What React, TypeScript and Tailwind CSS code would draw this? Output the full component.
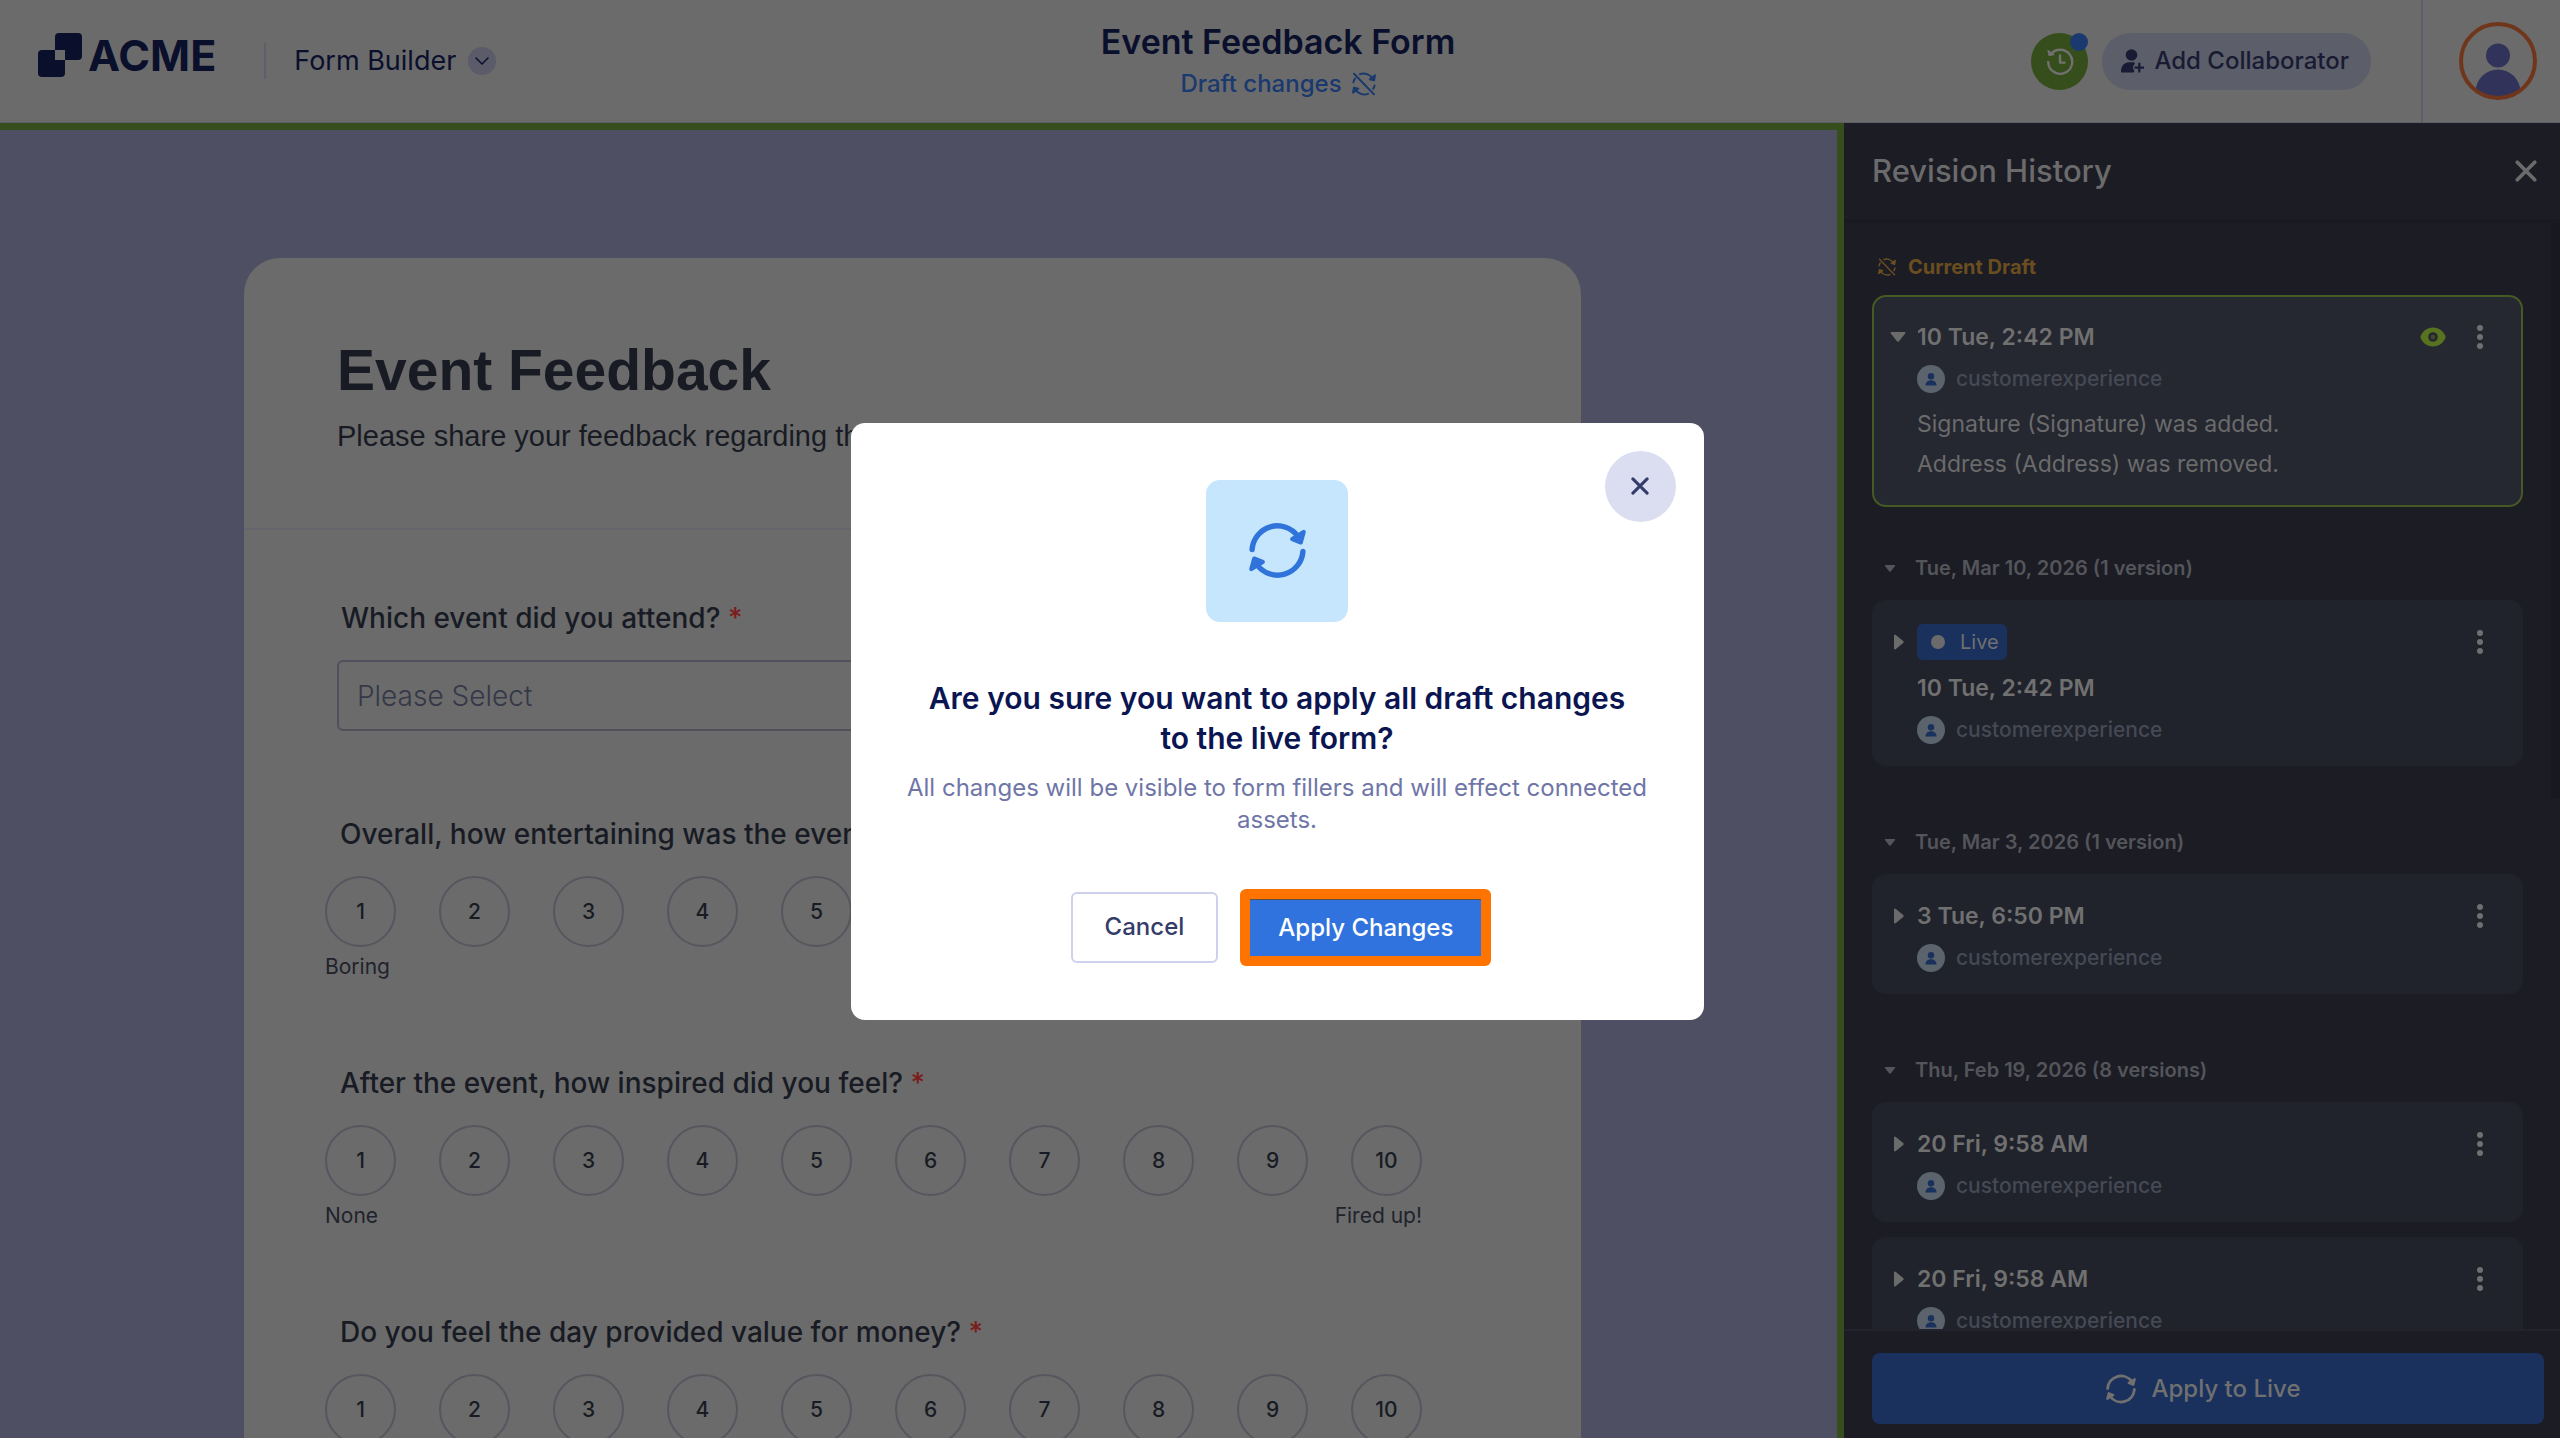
import { useState } from "react";
import type { ReactNode } from "react";

interface Version {
  id: number;
  date: string;
  live?: boolean;
  current?: boolean;
  changes?: string[];
}

interface VersionGroup {
  title: string;
  versions: Version[];
}

interface Rating {
  id: string;
  question: string;
  low?: string;
  high?: string;
}

const currentDraft: Version = {
  id: 1,
  date: "10 Tue, 2:42 PM",
  current: true,
  changes: ["Signature (Signature) was added.", "Address (Address) was removed."],
};

const groups: VersionGroup[] = [
  {
    title: "Tue, Mar 10, 2026 (1 version)",
    versions: [{ id: 2, date: "10 Tue, 2:42 PM", live: true }],
  },
  {
    title: "Tue, Mar 3, 2026 (1 version)",
    versions: [{ id: 3, date: "3 Tue, 6:50 PM" }],
  },
  {
    title: "Thu, Feb 19, 2026 (8 versions)",
    versions: [
      { id: 4, date: "20 Fri, 9:58 AM" },
      { id: 5, date: "20 Fri, 9:58 AM" },
    ],
  },
];

const ratings: Rating[] = [
  { id: "entertaining", question: "Overall, how entertaining was the event?", low: "Boring" },
  { id: "inspired", question: "After the event, how inspired did you feel?", low: "None", high: "Fired up!" },
  { id: "value", question: "Do you feel the day provided value for money?" },
];

const scale = [1, 2, 3, 4, 5, 6, 7, 8, 9, 10];

// Icons

const SyncIcon = ({ className }: { className: string }) => (
  <svg viewBox="0 0 24 24" className={className} fill="none" stroke="currentColor" strokeLinecap="round" strokeLinejoin="round" aria-hidden="true">
    <path d="M1.3 11.6A10.7 10.7 0 0 1 20.6 6" strokeWidth="2.3" />
    <path d="M23 4.2 21.8 8.6 18.2 7.2Z" fill="currentColor" strokeWidth="1.8" />
    <path d="M22.7 12.4A10.7 10.7 0 0 1 3.4 18" strokeWidth="2.3" />
    <path d="M1 19.8 2.2 15.4 5.8 16.8Z" fill="currentColor" strokeWidth="1.8" />
  </svg>
);

const SyncOffIcon = ({ className }: { className: string }) => (
  <svg viewBox="0 0 24 24" className={className} fill="none" stroke="currentColor" strokeWidth="2" strokeLinecap="round" strokeLinejoin="round" aria-hidden="true">
    <path d="M2 1.8 22 22.4" />
    <path d="M1.4 10.4A10.6 10.6 0 0 1 3 6.6" />
    <path d="M8 2.1A10.6 10.6 0 0 1 20.6 6.6" />
    <path d="M23 3.4 22 8.4 17.8 7.2Z" fill="currentColor" />
    <path d="M22.6 13.4A10.6 10.6 0 0 1 21.2 16.8" />
    <path d="M16 21.9A10.6 10.6 0 0 1 3.4 17.4" />
    <path d="M1 20.6 2 15.6 6.2 16.8Z" fill="currentColor" />
  </svg>
);

const CloseIcon = ({ className }: { className: string }) => (
  <svg viewBox="0 0 24 24" className={className} fill="none" stroke="currentColor" strokeWidth="4" strokeLinecap="round" aria-hidden="true">
    <path d="M2.5 2.5 21.5 21.5M21.5 2.5 2.5 21.5" />
  </svg>
);

const HistoryIcon = () => (
  <svg viewBox="0 0 28 28" className="size-7" fill="none" stroke="currentColor" strokeWidth="2.4" strokeLinecap="round" strokeLinejoin="round" aria-hidden="true">
    <path d="M2.2 15A12 12 0 1 0 4.6 7.6" />
    <path d="M2 3.6 3 8.4 7.8 7.6Z" fill="currentColor" strokeWidth="1.2" />
    <path d="M14 8.5V15.6H18.6" />
  </svg>
);

const AddPersonIcon = () => (
  <svg viewBox="0 0 24 24" className="size-6" fill="currentColor" aria-hidden="true">
    <circle cx="11.5" cy="6" r="5.8" />
    <path d="M1 22.5C1 17 4.5 13.3 9 13.3H13.6C14.8 13.3 15.3 14.6 14.4 15.4 12.6 16.8 12.6 19.4 14 21 14.7 21.8 14.3 23.6 13 23.6H2C1.4 23.6 1 23.2 1 22.5Z" />
    <path d="M19.3 14.6V22.6M15.3 18.6H23.3" stroke="currentColor" strokeWidth="2.2" strokeLinecap="round" />
  </svg>
);

const AvatarIcon = () => (
  <svg viewBox="0 0 78 78" className="size-[78px]" aria-hidden="true">
    <clipPath id="avatar-clip">
      <circle cx="39" cy="39" r="36" />
    </clipPath>
    <g clipPath="url(#avatar-clip)" fill="#32335a">
      <circle cx="39" cy="33.5" r="12" />
      <circle cx="39" cy="70" r="22.5" />
    </g>
    <circle cx="39" cy="39" r="37" fill="none" stroke="#70361c" strokeWidth="4" />
  </svg>
);

const EyeIcon = () => (
  <svg viewBox="0 0 26 20" className="h-5 w-[26px] text-[#587320]" aria-hidden="true">
    <path
      fill="currentColor"
      fillRule="evenodd"
      d="M13 .5C19 .5 23.6 4.6 25.3 8.8Q25.8 10 25.3 11.2C23.6 15.4 19 19.5 13 19.5S2.4 15.4 .7 11.2Q.2 10 .7 8.8C2.4 4.6 7 .5 13 .5ZM13 5.2A4.8 4.8 0 1 0 13 14.8A4.8 4.8 0 1 0 13 5.2Z"
    />
    <circle cx="13" cy="10" r="2.3" fill="currentColor" opacity="0.5" />
  </svg>
);

const UserBadge = () => (
  <svg viewBox="0 0 28 28" className="size-7" aria-hidden="true">
    <circle cx="14" cy="14" r="14" fill="#5b646c" />
    <circle cx="14" cy="11.2" r="3.2" fill="#1a315e" />
    <path d="M8.5 20.5C8.5 17.5 10.5 15.3 14 15.3S19.5 17.5 19.5 20.5Z" fill="#1a315e" />
  </svg>
);

const TriangleDown = ({ className }: { className: string }) => (
  <svg viewBox="0 0 16 10" className={className} fill="currentColor" aria-hidden="true">
    <path d="M1.5 0H14.5Q16 .3 15.2 1.6L9 9.2Q8 10.2 7 9.2L.8 1.6Q0 .3 1.5 0Z" />
  </svg>
);

const TriangleRight = () => (
  <svg viewBox="0 0 10 16" className="h-4 w-2.5" fill="currentColor" aria-hidden="true">
    <path d="M0 1.5Q.3 0 1.6 .8L9.2 7Q10.2 8 9.2 9L1.6 15.2Q.3 16 0 14.5Z" />
  </svg>
);

// Revision history

const VersionTitle = ({ children }: { children: ReactNode }) => (
  <span className="flex h-9 items-center text-[23px] font-semibold text-[#707070]">{children}</span>
);

const VersionCard = ({ version }: { version: Version }) => (
  <article
    className={`flex rounded-[14px] border-2 pt-[22px] pr-[31px] pb-5 pl-3 ${
      version.current ? "border-[#465b23] bg-[#252731]" : "border-[#20232c] bg-[#20232c]"
    }`}
  >
    <button aria-label="Toggle version details" className="flex h-9 w-[31px] items-center justify-start pl-1 text-[#6b6b6b]">
      {version.current ? <TriangleDown className="h-2.5 w-4" /> : <span className="pl-1"><TriangleRight /></span>}
    </button>
    <div className="flex flex-1 flex-col gap-2.5">
      {version.live && (
        <span className="flex h-9 items-center gap-[15px] self-start rounded-md bg-[#1a315e] pr-2 pl-3.5 text-xl text-[#707070]">
          <span className="size-3.5 rounded-full bg-[#6b6b6b]" />
          Live
        </span>
      )}
      <VersionTitle>{version.date}</VersionTitle>
      <div className="flex items-center gap-[11px] text-[21px]/7 font-medium text-[#454954]">
        <UserBadge />
        customerexperience
      </div>
      {version.changes && (
        <ul className="py-px text-[23px]/10 text-[#6b6b6b]">
          {version.changes.map((change) => (
            <li key={change}>{change}</li>
          ))}
        </ul>
      )}
    </div>
    {version.current && (
      <button aria-label="Viewing this version" className="mr-6 flex h-9 items-center">
        <EyeIcon />
      </button>
    )}
    <button aria-label="More options" className="flex h-9 w-5 flex-col items-center justify-center gap-[3px]">
      <span className="size-1.5 rounded-full bg-[#707070]" />
      <span className="size-1.5 rounded-full bg-[#707070]" />
      <span className="size-1.5 rounded-full bg-[#707070]" />
    </button>
  </article>
);

const RevisionHistory = ({ onApply }: { onApply: () => void }) => (
  <aside className="flex w-[716px] shrink-0 flex-col bg-[#1c1c25]">
    <div className="flex h-24 shrink-0 items-center justify-between pr-[23px] pl-7 text-[#6b6b6b]">
      <h2 className="text-[31px] font-medium">Revision History</h2>
      <button aria-label="Close revision history">
        <CloseIcon className="size-[22px]" />
      </button>
    </div>
    <div className="flex min-h-0 flex-1 border-t-4 border-[#191922]">
      <div className="min-w-0 flex-1 overflow-hidden pt-8 pr-7 pl-7">
        <div className="mb-4 flex items-center gap-3 pl-1.5 text-xl/6 font-bold text-[#6a4e20]">
          <SyncOffIcon className="size-[18px]" />
          Current Draft
        </div>
        <VersionCard version={currentDraft} />
        {groups.map((group) => (
          <section key={group.title}>
            <h3 className="flex items-center gap-[19px] pt-[49px] pb-5 pl-3 text-xl/6 font-semibold text-[#54555a]">
              <TriangleDown className="h-[7px] w-3" />
              {group.title}
            </h3>
            {group.versions.map((version) => (
              <div key={version.id} className="pb-[15px]">
                <VersionCard version={version} />
              </div>
            ))}
          </section>
        ))}
      </div>
      {/* Scrollbar */}
      <div className="w-[9px]">
        <div className="h-[52%] bg-[#181821]" />
      </div>
    </div>
    <div className="border-t-2 border-[#23232d] pt-[22px] pr-4 pb-3.5 pl-7">
      <button
        onClick={onApply}
        className="flex h-[71px] w-full items-center justify-center gap-4 rounded-lg bg-[#1a315e] pr-2.5 text-2xl font-medium text-[#707070]"
      >
        <SyncIcon className="size-[30px]" />
        Apply to Live
      </button>
    </div>
  </aside>
);

// Form

const Required = () => <span className="text-[#7c1c1c]">*</span>;

const RatingQuestion = ({ rating }: { rating: Rating }) => (
  <div role="radiogroup" aria-labelledby={rating.id} className="self-start pl-[81px]">
    <p id={rating.id} className="mb-6 pl-[15px] text-[28px]/9 font-medium">
      {rating.question} <Required />
    </p>
    <div className="flex gap-[43px]">
      {scale.map((value) => (
        <label
          key={value}
          className="flex size-[71px] items-center justify-center rounded-full border-2 border-[#56565f] text-[21px] font-medium"
        >
          <input type="radio" name={rating.id} value={value} className="sr-only" />
          {value}
        </label>
      ))}
    </div>
    <div className="mt-1.5 flex justify-between text-[21px]/7 text-[#20232c]">
      <span>{rating.low}</span>
      <span>{rating.high}</span>
    </div>
  </div>
);

const FeedbackForm = () => (
  <main className="min-w-0 flex-1 overflow-hidden border-t-[7px] border-r-[7px] border-[#364e1b] bg-[#4f4f63] pt-32 pr-64 pl-[244px]">
    <form className="rounded-t-[36px] bg-[#6b6b6b] text-[#181b24]">
      <div className="border-b-2 border-[#65656e] px-[93px] pt-20 pb-[74px]">
        <h2 className="mb-4 font-['Liberation_Sans',sans-serif] text-[57px]/16 font-bold">Event Feedback</h2>
        <p className="font-['Liberation_Sans',sans-serif] text-[29px]/9">
          Please share your feedback regarding the event you attended
        </p>
      </div>
      <div className="flex flex-col gap-[85px] pt-[70px]">
        <div className="pl-[93px]">
          <label htmlFor="event" className="mb-6 block pl-1 text-[28px]/9 font-medium">
            Which event did you attend? <Required />
          </label>
          <select
            id="event"
            className="h-[71px] w-1/2 appearance-none rounded-md border-2 border-[#50505c] px-[18px] text-[28px] font-light text-[#343848]"
          >
            <option>Please Select</option>
          </select>
        </div>
        <div className="flex flex-col gap-[84px]">
          {ratings.map((rating) => (
            <RatingQuestion key={rating.id} rating={rating} />
          ))}
        </div>
      </div>
    </form>
  </main>
);

const Header = () => (
  <header className="grid h-[123px] shrink-0 grid-cols-[1fr_auto_1fr] border-b border-[#5f5f6a] bg-[#6b6b6b] text-[#0a0f2c]">
    <div className="flex items-center">
      <a href="#" className="flex items-center gap-1.5 pb-3 pl-[38px] text-[43px] font-bold">
        <svg viewBox="0 0 44 44" className="size-11" aria-hidden="true">
          <rect x="17" width="27" height="27" rx="4" fill="currentColor" />
          <rect y="17" width="27" height="27" rx="4" fill="currentColor" />
          <rect x="17" y="17" width="10" height="10" fill="#6b6b6b" />
        </svg>
        ACME
      </a>
      <span className="ml-12 h-9 w-0.5 bg-[#5f5f6a]" />
      <button className="ml-7 flex items-center gap-3 text-[27px]">
        Form Builder
        <span className="flex size-7 items-center justify-center rounded-full bg-[#5b5b69]">
          <svg viewBox="0 0 14 8" className="h-2 w-3.5" fill="none" stroke="currentColor" strokeWidth="1.5" strokeLinecap="round" aria-hidden="true">
            <path d="M1 1 7 7 13 1" />
          </svg>
        </span>
      </button>
    </div>
    <div className="flex flex-col items-center pt-5 pr-1">
      <h1 className="text-[34px]/11 font-semibold">Event Feedback Form</h1>
      <button className="flex items-center gap-2.5 text-2xl/10 font-medium text-[#1a396f]">
        Draft changes
        <SyncOffIcon className="size-6" />
      </button>
    </div>
    <div className="flex items-center justify-end">
      <button aria-label="Revision history" className="relative mr-3.5 flex size-[57px] items-center justify-center rounded-full bg-[#364e1b] text-[#707070]">
        <HistoryIcon />
        <span className="absolute top-0 right-0 size-[18px] rounded-full bg-[#1a396f]" />
      </button>
      <button className="flex h-[57px] items-center gap-2.5 rounded-full bg-[#5c5e69] pr-[22px] pl-[18px] text-2xl font-medium text-[#181b33]">
        <AddPersonIcon />
        Add Collaborator
      </button>
      <span className="ml-[50px] h-full w-0.5 bg-[#5c5e69]" />
      <button aria-label="Account" className="mr-[23px] ml-9">
        <AvatarIcon />
      </button>
    </div>
  </header>
);

const ApplyDialog = ({ onClose }: { onClose: () => void }) => (
  <div className="fixed inset-0 flex items-center justify-center pt-1 pr-1.5">
    <div role="dialog" aria-modal="true" aria-labelledby="apply-title" className="relative flex w-[853px] flex-col items-center rounded-[14px] bg-white px-12 pt-[57px] pb-[54px] text-center">
      <button
        aria-label="Close"
        onClick={onClose}
        className="absolute top-7 right-7 flex size-[71px] items-center justify-center rounded-full bg-[#dbdef1] text-[#343c6a]"
      >
        <CloseIcon className="size-[18px]" />
      </button>
      <div className="flex size-[142px] items-center justify-center rounded-[14px] bg-[#c5e6fd] text-[#3074db]">
        <SyncIcon className="size-[57px]" />
      </div>
      <h2 id="apply-title" className="mt-14 px-6 text-3xl/10 font-semibold text-[#0a1551]">
        Are you sure you want to apply all draft changes to the live form?
      </h2>
      <p className="mt-3.5 text-2xl/8 text-[#6f76a7]">
        All changes will be visible to form fillers and will effect connected assets.
      </p>
      <div className="mt-[53px] flex items-center gap-[22px] pl-2 text-2xl font-medium">
        <button onClick={onClose} className="h-[71px] rounded-md border-2 border-[#cdd1ee] px-8 text-[#343c6a]">
          Cancel
        </button>
        <button onClick={onClose} className="h-[77px] rounded-md bg-[#ff7300] p-2.5 text-white">
          <span className="flex h-full items-center border-t border-[#60503f] bg-[#3173de] px-7">Apply Changes</span>
        </button>
      </div>
    </div>
  </div>
);

const App = () => {
  const [isDialogOpen, setIsDialogOpen] = useState(true);

  return (
    <div className="flex h-screen flex-col overflow-hidden bg-[#6b6b6b] font-['Inter',sans-serif]">
      <Header />
      <div className="flex min-h-0 flex-1">
        <FeedbackForm />
        <RevisionHistory onApply={() => setIsDialogOpen(true)} />
      </div>
      {isDialogOpen && <ApplyDialog onClose={() => setIsDialogOpen(false)} />}
    </div>
  );
};

export default App;
